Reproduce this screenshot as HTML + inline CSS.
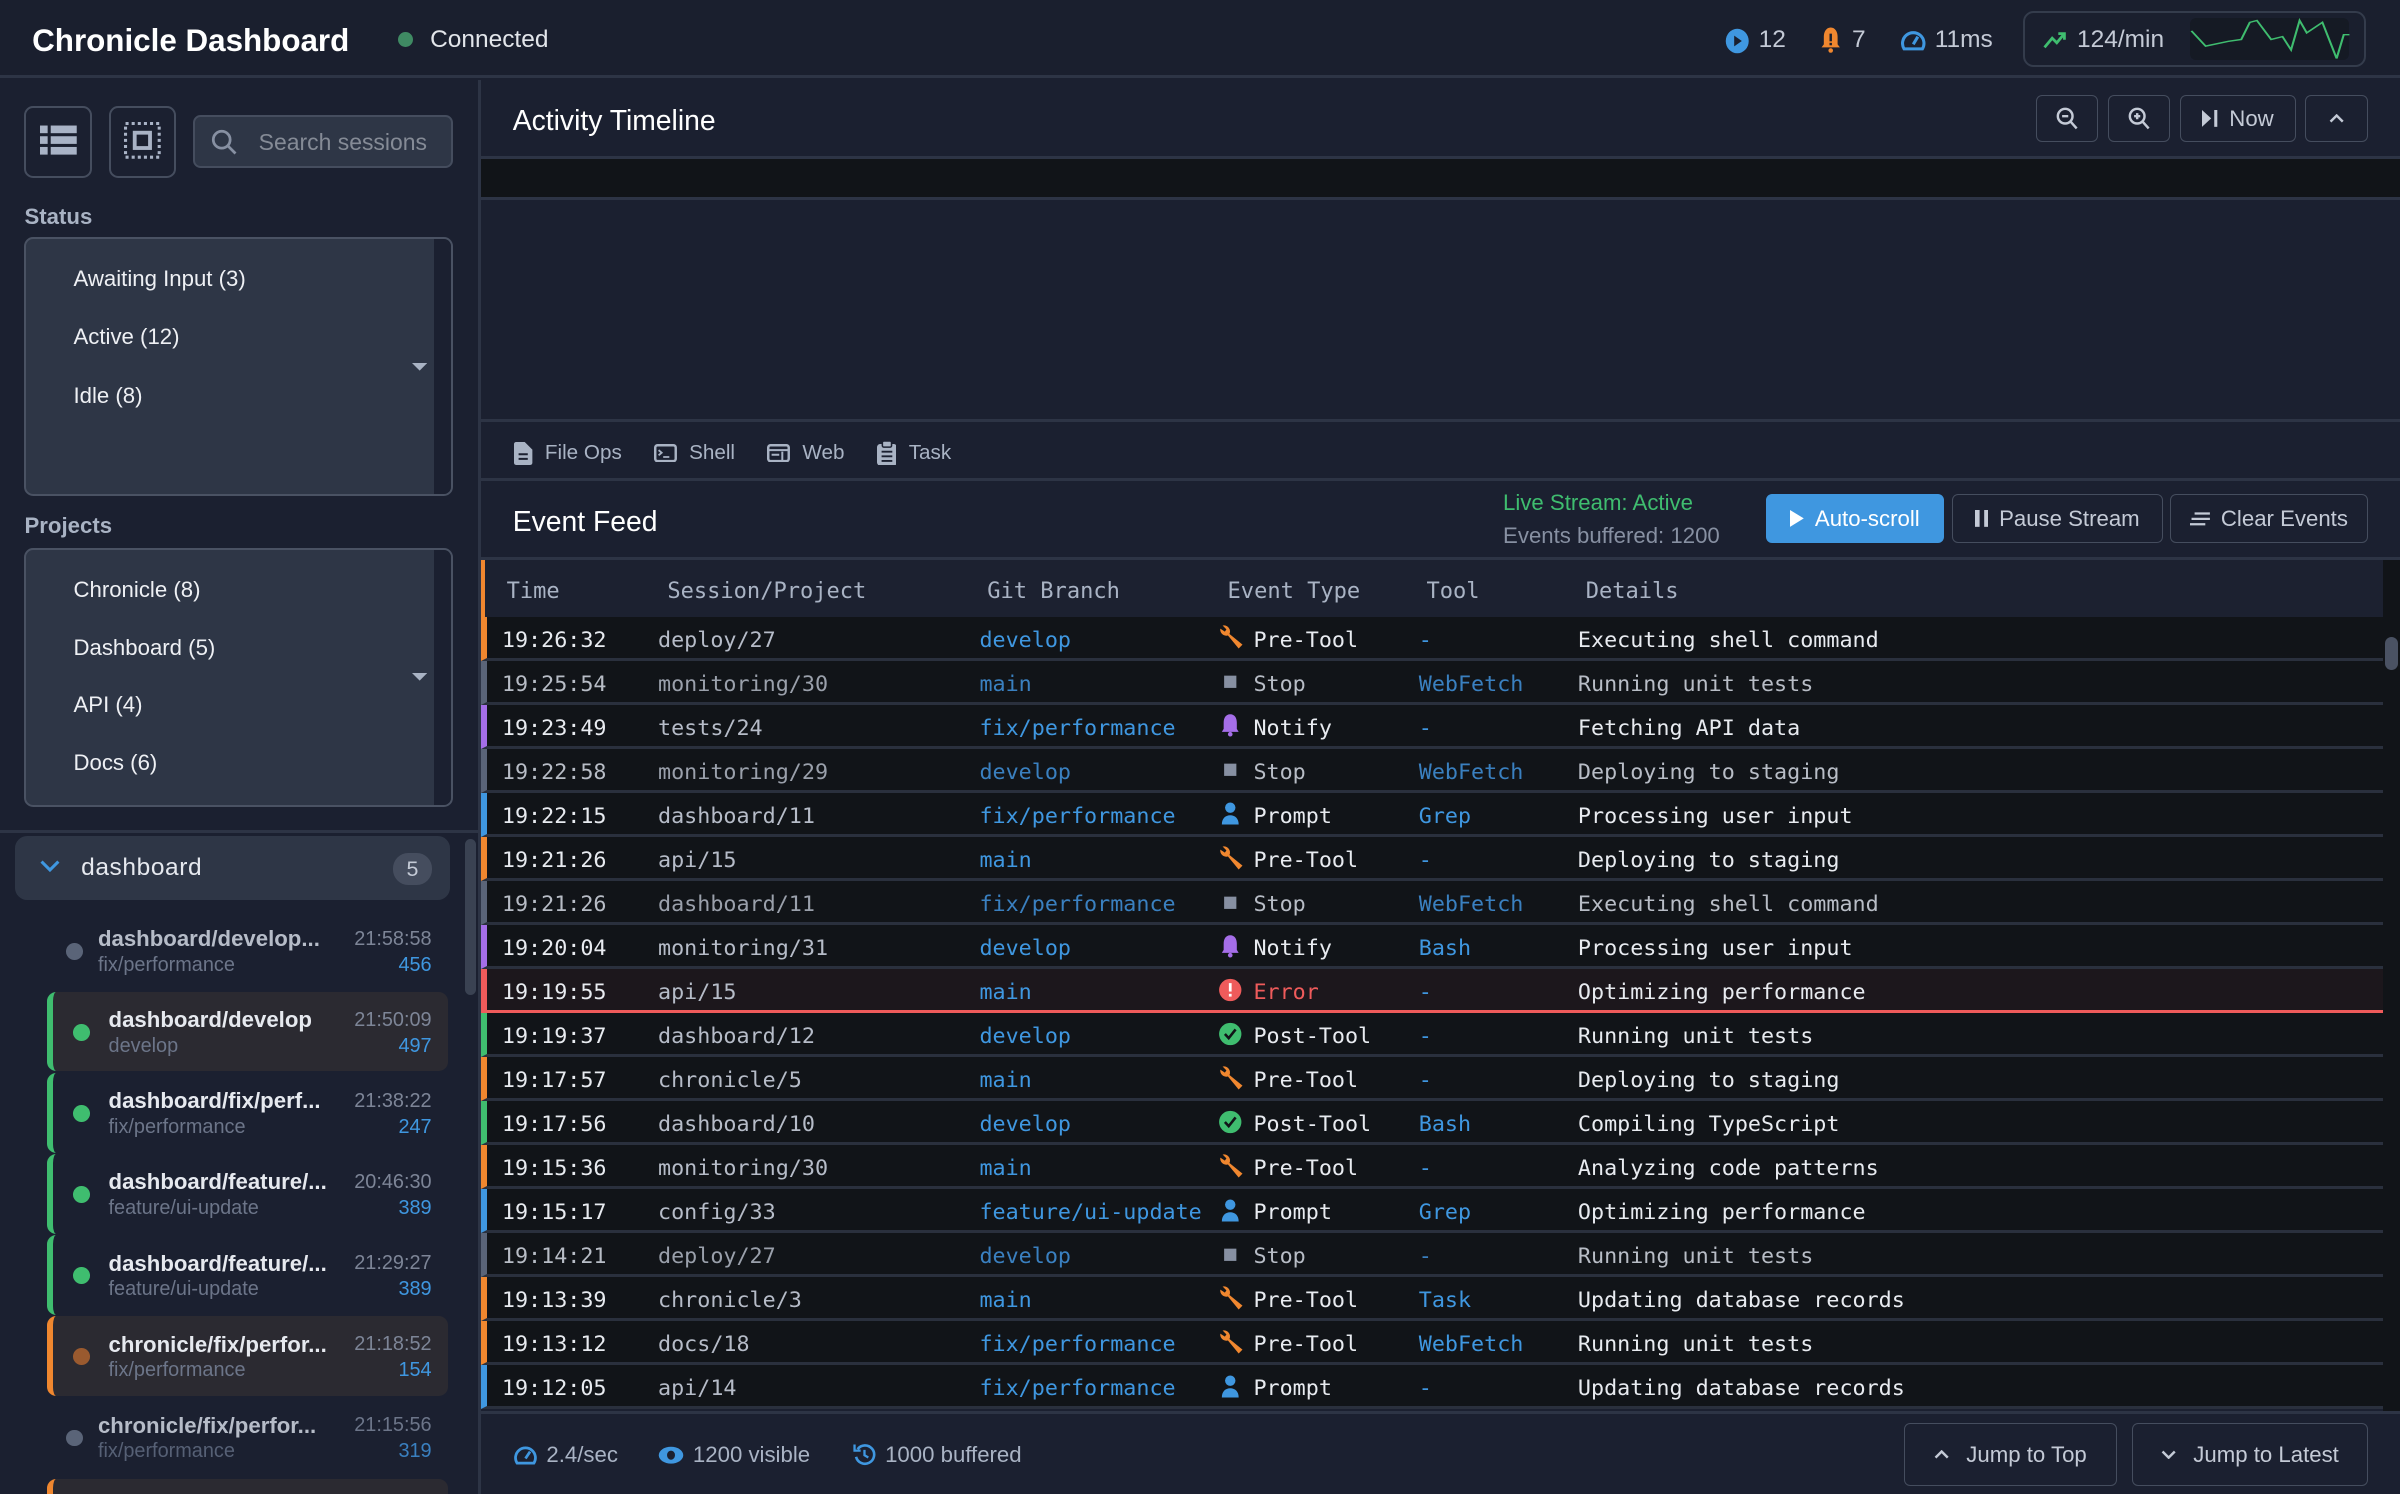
<!DOCTYPE html>
<html><head><meta charset="utf-8"><style>
*{box-sizing:border-box;margin:0;padding:0}
html,body{width:2400px;height:1494px;overflow:hidden;background:#1b2030}
#r{zoom:1.530612;width:1568px;height:976px;position:relative;font-family:"Liberation Sans",Arial,sans-serif;color:#e6e9ef;background:#1b2030;overflow:hidden}
.a{position:absolute}
.mono{font-family:"DejaVu Sans Mono","Liberation Mono",monospace}
.btn{position:absolute;border:1px solid #454d5e;border-radius:4px;color:#c4cad6;font-size:14.5px;display:flex;align-items:center;justify-content:center;gap:7px}
.row{position:absolute;left:314px;width:1243px;height:28.75px;background:#111418;border-bottom:2px solid #2a303d;font-size:14.2px;color:#e8ebf0}
.row span{position:absolute;top:7px;white-space:nowrap}
.row .t{left:10px}.row .s{left:112px;color:#b6bcc8}.row .g{left:322px;color:#3f97e0}
.row .ic{left:478px;top:5px}.row .e{left:501px}.row .tl{left:609px;color:#3f97e0}.row .d{left:713px}
.row.dim .t,.row.dim .d,.row.dim .e{color:#b8bdc6}.row.dim .s{color:#9aa0ab}.row.dim .g,.row.dim .tl{color:#3a80c0}
.si{position:absolute;left:31px;width:262px;height:52px;border-radius:6px}
.si .dot{position:absolute;left:13px;top:21px;width:11px;height:11px;border-radius:50%}
.si .n{position:absolute;left:36px;top:10px;font-size:14.5px;font-weight:bold;color:#e6e9ef;white-space:nowrap}
.si .b{position:absolute;left:36px;top:28px;font-size:13px;color:#6c7589}
.si .tm{position:absolute;right:11px;top:11px;font-size:13px;color:#7d8597}
.si .c{position:absolute;right:11px;top:28px;font-size:13px;color:#3f97e0}
.opt{position:absolute;left:48px;font-size:14.5px;color:#eef0f4}
</style></head><body><div id="r">
<!-- header -->
<div class="a" style="left:0;top:0;width:1568px;height:51px;background:#1a1f2e;border-bottom:2px solid #2d3445"></div>
<div class="a" style="left:21px;top:15px;font-size:20.5px;font-weight:bold;color:#fff">Chronicle Dashboard</div>
<div class="a" style="left:260px;top:21px;width:10px;height:10px;border-radius:50%;background:#3f8a63"></div>
<div class="a" style="left:281px;top:17px;font-size:16px;color:#e2e5ea">Connected</div>
<svg class="a" style="left:1127px;top:18px" width="16" height="17"><ellipse cx="8" cy="8.5" rx="7.5" ry="8" fill="#3f97e0"/><path d="M6 5l5 3.5-5 3.5z" fill="#1a1f2e"/></svg>
<div class="a" style="left:1149px;top:17px;font-size:16px;color:#c4cad6">12</div>
<svg class="a" style="left:1189px;top:17px" width="14" height="18"><path d="M7 1c-3 0-4.5 3-4.5 6v5L1 14h12l-1.5-2V7C11.5 4 10 1 7 1z" fill="#f0872f"/><rect x="6.2" y="5" width="1.6" height="5" fill="#1a1f2e"/><rect x="6.2" y="11" width="1.6" height="1.6" fill="#1a1f2e"/><circle cx="7" cy="16" r="1.5" fill="#f0872f"/></svg>
<div class="a" style="left:1210px;top:17px;font-size:16px;color:#c4cad6">7</div>
<svg class="a" style="left:1242px;top:19px" width="16" height="15"><path d="M2 13A7 7 0 1 1 14 13z" fill="none" stroke="#3f97e0" stroke-width="2"/><path d="M8 10L11 5" stroke="#3f97e0" stroke-width="2"/></svg>
<div class="a" style="left:1264px;top:17px;font-size:16px;color:#c4cad6">11ms</div>
<div class="a" style="left:1322px;top:7px;width:224px;height:37px;border:1.5px solid #343c4c;border-radius:7px"></div>
<svg class="a" style="left:1335px;top:19px" width="16" height="13"><path d="M1 12l5-6 3 3 5-6M10 3h4v4" fill="none" stroke="#3fbd6f" stroke-width="1.8"/></svg>
<div class="a" style="left:1357px;top:17px;font-size:16px;color:#c4cad6">124/min</div>
<div class="a" style="left:1431px;top:12px;width:104px;height:27px;background:#151a24;border-radius:4px"></div>
<svg class="a" style="left:1431px;top:12px" width="106" height="28"><polyline points="1,12 11,28 27,23 36,21 42,3 47,1 57,21 65,18 71,32 77,1 82,14 93,3 103,41 108,16 112,16" fill="none" stroke="#3fbd6f" stroke-width="1.5" transform="translate(0,1) scale(.93,.62)"/></svg>
<!-- sidebar -->
<div class="a" style="left:312px;top:52px;width:2px;height:924px;background:#2d3445"></div>
<div class="a" style="left:16px;top:69px;width:44px;height:47px;border:1.5px solid #454d5e;border-radius:6px"></div>
<svg class="a" style="left:26px;top:81px" width="24" height="22"><rect x="0" y="1" width="5" height="5" fill="#a9b3c6"/><rect x="7" y="1" width="17" height="5" fill="#a9b3c6"/><rect x="0" y="8" width="5" height="5" fill="#a9b3c6"/><rect x="7" y="8" width="17" height="5" fill="#a9b3c6"/><rect x="0" y="15" width="5" height="5" fill="#a9b3c6"/><rect x="7" y="15" width="17" height="5" fill="#a9b3c6"/></svg>
<div class="a" style="left:71px;top:69px;width:44px;height:47px;border:1.5px solid #454d5e;border-radius:6px"></div>
<svg class="a" style="left:81px;top:80px" width="24" height="24"><rect x="1" y="1" width="22" height="22" fill="none" stroke="#a9b3c6" stroke-width="2" stroke-dasharray="2 2"/><rect x="7" y="7" width="10" height="10" fill="none" stroke="#a9b3c6" stroke-width="2.5"/></svg>
<div class="a" style="left:126px;top:75px;width:170px;height:35px;background:#2e3646;border:1.5px solid #454d5e;border-radius:5px"></div>
<svg class="a" style="left:138px;top:84px" width="17" height="18"><circle cx="7" cy="7" r="5.5" fill="none" stroke="#8790a2" stroke-width="1.8"/><path d="M11 11l5 5" stroke="#8790a2" stroke-width="1.8"/></svg>
<div class="a" style="left:169px;top:84px;width:112px;overflow:hidden;white-space:nowrap;font-size:15px;color:#858b96">Search sessions</div>
<div class="a" style="left:16px;top:133px;font-size:14.5px;font-weight:bold;color:#a9b3c4">Status</div>
<div class="a" style="left:16px;top:155px;width:280px;height:169px;background:#2e3646;border:1.5px solid #4a5263;border-radius:6px;overflow:hidden"><div class="a" style="right:0;top:0;width:11px;height:100%;background:#1b2030"></div></div>
<div class="opt" style="top:174px">Awaiting Input (3)</div><div class="opt" style="top:212px">Active (12)</div><div class="opt" style="top:250px">Idle (8)</div>
<svg class="a" style="left:269px;top:237px" width="10" height="6"><path d="M0 0h10L5 5z" fill="#a9b3c4"/></svg>
<div class="a" style="left:16px;top:335px;font-size:14.5px;font-weight:bold;color:#a9b3c4">Projects</div>
<div class="a" style="left:16px;top:358px;width:280px;height:169px;background:#2e3646;border:1.5px solid #4a5263;border-radius:6px;overflow:hidden"><div class="a" style="right:0;top:0;width:11px;height:100%;background:#1b2030"></div></div>
<div class="opt" style="top:377px">Chronicle (8)</div><div class="opt" style="top:415px">Dashboard (5)</div><div class="opt" style="top:452px">API (4)</div><div class="opt" style="top:490px">Docs (6)</div>
<svg class="a" style="left:269px;top:440px" width="10" height="6"><path d="M0 0h10L5 5z" fill="#a9b3c4"/></svg>
<div class="a" style="left:0;top:542px;width:312px;height:2px;background:#2d3445"></div>
<div class="a" style="left:304px;top:548px;width:7px;height:102px;border-radius:4px;background:#3a4252"></div>
<div class="a" style="left:10px;top:546px;width:284px;height:42px;background:#2e3646;border-radius:8px"></div>
<svg class="a" style="left:26px;top:562px" width="13" height="9"><path d="M1 1l5.5 5.5L12 1" fill="none" stroke="#3f97e0" stroke-width="2"/></svg>
<div class="a" style="left:53px;top:558px;font-size:16px;color:#e6e9ef;letter-spacing:.4px">dashboard</div>
<div class="a" style="left:257px;top:557px;width:25px;height:21px;border-radius:10px;background:#454d5e;color:#c4cad6;font-size:14px;text-align:center;line-height:21px">5</div>
<div class="si" style="top:595px"><div class="dot" style="left:12px;background:#5a6478"></div><div class="n" style="left:33px;color:#b6bcc8">dashboard/develop...</div><div class="b" style="left:33px">fix/performance</div><div class="tm">21:58:58</div><div class="c">456</div></div>
<div class="si" style="top:648px;background:#2b2a31;border-left:4px solid #3fbd6f"><div class="dot" style="background:#3fbd6f"></div><div class="n">dashboard/develop</div><div class="b">develop</div><div class="tm">21:50:09</div><div class="c">497</div></div>
<div class="si" style="top:701px;border-left:4px solid #3fbd6f"><div class="dot" style="background:#3fbd6f"></div><div class="n">dashboard/fix/perf...</div><div class="b">fix/performance</div><div class="tm">21:38:22</div><div class="c">247</div></div>
<div class="si" style="top:754px;border-left:4px solid #3fbd6f"><div class="dot" style="background:#3fbd6f"></div><div class="n">dashboard/feature/...</div><div class="b">feature/ui-update</div><div class="tm">20:46:30</div><div class="c">389</div></div>
<div class="si" style="top:807px;border-left:4px solid #3fbd6f"><div class="dot" style="background:#3fbd6f"></div><div class="n">dashboard/feature/...</div><div class="b">feature/ui-update</div><div class="tm">21:29:27</div><div class="c">389</div></div>
<div class="si" style="top:860px;background:#2b2a31;border-left:4px solid #f0872f"><div class="dot" style="background:#9a5a2f"></div><div class="n">chronicle/fix/perfor...</div><div class="b">fix/performance</div><div class="tm">21:18:52</div><div class="c">154</div></div>
<div class="si" style="top:913px"><div class="dot" style="left:12px;background:#5a6478"></div><div class="n" style="left:33px;color:#b6bcc8">chronicle/fix/perfor...</div><div class="b" style="left:33px;color:#566075">fix/performance</div><div class="tm" style="color:#6c7589">21:15:56</div><div class="c" style="color:#3a80c0">319</div></div>
<div class="si" style="top:966px;background:#2b2a31;border-left:4px solid #f0872f"></div>
<!-- timeline -->
<div class="a" style="left:335px;top:68px;font-size:18.5px;color:#fff">Activity Timeline</div>
<div class="btn" style="left:1330px;top:62px;width:41px;height:31px"><svg width="14" height="15"><circle cx="6" cy="6" r="4.8" fill="none" stroke="#c4cad6" stroke-width="1.6"/><path d="M9.5 9.5l4 4.5M4 6h4" stroke="#c4cad6" stroke-width="1.6"/></svg></div>
<div class="btn" style="left:1377px;top:62px;width:41px;height:31px"><svg width="14" height="15"><circle cx="6" cy="6" r="4.8" fill="none" stroke="#c4cad6" stroke-width="1.6"/><path d="M9.5 9.5l4 4.5M4 6h4M6 4v4" stroke="#c4cad6" stroke-width="1.6"/></svg></div>
<div class="btn" style="left:1424px;top:62px;width:76px;height:31px"><svg width="11" height="11"><path d="M0 0l6 5.5L0 11z" fill="#c4cad6"/><rect x="8" y="0" width="2" height="11" fill="#c4cad6"/></svg>Now</div>
<div class="btn" style="left:1506px;top:62px;width:41px;height:31px"><svg width="10" height="6"><path d="M1 5l4-4 4 4" fill="none" stroke="#c4cad6" stroke-width="1.6"/></svg></div>
<div class="a" style="left:314px;top:102px;width:1254px;height:2px;background:#2d3445"></div>
<div class="a" style="left:314px;top:104px;width:1254px;height:25px;background:#111418"></div>
<div class="a" style="left:314px;top:129px;width:1254px;height:2px;background:#2d3445"></div>
<div class="a" style="left:314px;top:274px;width:1254px;height:2px;background:#2d3445"></div>
<div class="a" style="left:336px;top:288px;font-size:13.5px;color:#a9b3c4;display:flex;gap:8px;align-items:center">
<svg width="12" height="15"><path d="M0 1.5Q0 0 1.5 0H7l5 5v8.5Q12 15 10.5 15h-9Q0 15 0 13.5z" fill="#a9b3c4"/><path d="M3 8h6M3 11h6" stroke="#1b2030" stroke-width="1.3"/></svg><span style="margin-right:13px">File Ops</span>
<svg width="15" height="12"><rect x="0.8" y="0.8" width="13.4" height="10.4" rx="1.5" fill="none" stroke="#a9b3c4" stroke-width="1.6"/><path d="M3 4l2 1.7L3 7.4M6 8.5h4" stroke="#a9b3c4" stroke-width="1.2" fill="none"/></svg><span style="margin-right:13px">Shell</span>
<svg width="15" height="12"><rect x="0.8" y="0.8" width="13.4" height="10.4" rx="1.5" fill="none" stroke="#a9b3c4" stroke-width="1.6"/><path d="M1 4h13M3 7h5M10 5v6" stroke="#a9b3c4" stroke-width="1.3"/></svg><span style="margin-right:13px">Web</span>
<svg width="13" height="16"><rect x="0" y="2" width="13" height="14" rx="2" fill="#a9b3c4"/><rect x="3.5" y="0" width="6" height="4" rx="1" fill="#a9b3c4" stroke="#1b2030"/><path d="M3 7h7M3 10h7M3 13h7" stroke="#1b2030" stroke-width="1.2"/></svg><span>Task</span></div>
<div class="a" style="left:314px;top:312px;width:1254px;height:2px;background:#2d3445"></div>
<!-- event feed -->
<div class="a" style="left:335px;top:330px;font-size:18.5px;color:#fff">Event Feed</div>
<div class="a" style="left:982px;top:320px;font-size:14.5px;color:#3fbd6f">Live Stream: Active</div>
<div class="a" style="left:982px;top:342px;font-size:14.5px;color:#8790a2">Events buffered: 1200</div>
<div class="btn" style="left:1154px;top:323px;width:116px;height:32px;background:#3f97e0;border-color:#3f97e0;color:#fff"><svg width="9" height="11"><path d="M0 0l9 5.5L0 11z" fill="#fff"/></svg>Auto-scroll</div>
<div class="btn" style="left:1275px;top:323px;width:138px;height:32px"><svg width="9" height="11"><rect width="3" height="11" fill="#c4cad6"/><rect x="6" width="3" height="11" fill="#c4cad6"/></svg>Pause Stream</div>
<div class="btn" style="left:1418px;top:323px;width:129px;height:32px"><svg width="13" height="9"><path d="M3 1h10M1 4.5h12M0 8h10" stroke="#c4cad6" stroke-width="1.5"/></svg>Clear Events</div>
<div class="a" style="left:314px;top:364px;width:1254px;height:2px;background:#2d3445"></div>
<div class="a" style="left:314px;top:366px;width:1243px;height:37px;background:#1c2130;border-left:3px solid #f0872f"></div>
<div class="a mono" style="left:314px;top:378px;width:1243px;font-size:14.4px;color:#a9b3c4">
<span class="a" style="left:17px">Time</span><span class="a" style="left:122px">Session/Project</span><span class="a" style="left:331px">Git Branch</span><span class="a" style="left:488px">Event Type</span><span class="a" style="left:618px">Tool</span><span class="a" style="left:722px">Details</span></div>
<div class="a" style="left:1557px;top:366px;width:11px;height:558px;background:#111418"></div>
<div class="a" style="left:1558px;top:416px;width:9px;height:22px;border-radius:5px;background:#4a5263"></div>
<svg width="0" height="0" style="position:absolute"><defs>
<g id="w"><path d="M1.5 3a4 4 0 0 0 5 4.5l7 8.5 2.5-2.5-8.5-7A4 4 0 0 0 3 1l2.5 2.5-1 1.5z" fill="#f0872f"/></g>
<g id="st"><rect x="4" y="5" width="8" height="8" fill="#8790a2"/></g>
<g id="nt"><path d="M8 1.5c-3 0-4.3 2.6-4.3 5.5v4L2.5 13h11l-1.2-2V7C12.3 4.1 11 1.5 8 1.5z" fill="#a56ee8"/><circle cx="8" cy="14.5" r="1.5" fill="#a56ee8"/></g>
<g id="pr"><circle cx="8" cy="5" r="3.4" fill="#3f97e0"/><path d="M2.5 16c0-4 2.5-6 5.5-6s5.5 2 5.5 6z" fill="#3f97e0"/></g>
<g id="er"><circle cx="8" cy="8.5" r="7.3" fill="#ef5b5b"/><rect x="7.1" y="4" width="1.8" height="5.5" fill="#fff"/><rect x="7.1" y="11" width="1.8" height="1.8" fill="#fff"/></g>
<g id="ok"><circle cx="8" cy="8.5" r="7.3" fill="#3fbd6f"/><path d="M4.5 8.5l2.5 2.7L11.5 5.5" fill="none" stroke="#111418" stroke-width="1.7"/></g>
</defs></svg>
<div class="mono">
<div class="row" style="top:403px;border-left:4px solid #f0872f"><span class="t">19:26:32</span><span class="s">deploy/27</span><span class="g">develop</span><svg class="a ic" width="17" height="18"><use href="#w"/></svg><span class="e">Pre-Tool</span><span class="tl">-</span><span class="d">Executing shell command</span></div>
<div class="row dim" style="top:431.75px;border-left:4px solid #5a6478"><span class="t">19:25:54</span><span class="s">monitoring/30</span><span class="g">main</span><svg class="a ic" width="17" height="18"><use href="#st"/></svg><span class="e">Stop</span><span class="tl">WebFetch</span><span class="d">Running unit tests</span></div>
<div class="row" style="top:460.5px;border-left:4px solid #a56ee8"><span class="t">19:23:49</span><span class="s">tests/24</span><span class="g">fix/performance</span><svg class="a ic" width="17" height="18"><use href="#nt"/></svg><span class="e">Notify</span><span class="tl">-</span><span class="d">Fetching API data</span></div>
<div class="row dim" style="top:489.25px;border-left:4px solid #5a6478"><span class="t">19:22:58</span><span class="s">monitoring/29</span><span class="g">develop</span><svg class="a ic" width="17" height="18"><use href="#st"/></svg><span class="e">Stop</span><span class="tl">WebFetch</span><span class="d">Deploying to staging</span></div>
<div class="row" style="top:518px;border-left:4px solid #3f97e0"><span class="t">19:22:15</span><span class="s">dashboard/11</span><span class="g">fix/performance</span><svg class="a ic" width="17" height="18"><use href="#pr"/></svg><span class="e">Prompt</span><span class="tl">Grep</span><span class="d">Processing user input</span></div>
<div class="row" style="top:546.75px;border-left:4px solid #f0872f"><span class="t">19:21:26</span><span class="s">api/15</span><span class="g">main</span><svg class="a ic" width="17" height="18"><use href="#w"/></svg><span class="e">Pre-Tool</span><span class="tl">-</span><span class="d">Deploying to staging</span></div>
<div class="row dim" style="top:575.5px;border-left:4px solid #5a6478"><span class="t">19:21:26</span><span class="s">dashboard/11</span><span class="g">fix/performance</span><svg class="a ic" width="17" height="18"><use href="#st"/></svg><span class="e">Stop</span><span class="tl">WebFetch</span><span class="d">Executing shell command</span></div>
<div class="row" style="top:604.25px;border-left:4px solid #a56ee8"><span class="t">19:20:04</span><span class="s">monitoring/31</span><span class="g">develop</span><svg class="a ic" width="17" height="18"><use href="#nt"/></svg><span class="e">Notify</span><span class="tl">Bash</span><span class="d">Processing user input</span></div>
<div class="row" style="top:633px;border-left:4px solid #ef5b5b;background:#1c171c;border-bottom:2px solid #ef5b5b"><span class="t">19:19:55</span><span class="s">api/15</span><span class="g">main</span><svg class="a ic" width="17" height="18"><use href="#er"/></svg><span class="e" style="color:#ef5b5b">Error</span><span class="tl">-</span><span class="d">Optimizing performance</span></div>
<div class="row" style="top:661.75px;border-left:4px solid #3fbd6f"><span class="t">19:19:37</span><span class="s">dashboard/12</span><span class="g">develop</span><svg class="a ic" width="17" height="18"><use href="#ok"/></svg><span class="e">Post-Tool</span><span class="tl">-</span><span class="d">Running unit tests</span></div>
<div class="row" style="top:690.5px;border-left:4px solid #f0872f"><span class="t">19:17:57</span><span class="s">chronicle/5</span><span class="g">main</span><svg class="a ic" width="17" height="18"><use href="#w"/></svg><span class="e">Pre-Tool</span><span class="tl">-</span><span class="d">Deploying to staging</span></div>
<div class="row" style="top:719.25px;border-left:4px solid #3fbd6f"><span class="t">19:17:56</span><span class="s">dashboard/10</span><span class="g">develop</span><svg class="a ic" width="17" height="18"><use href="#ok"/></svg><span class="e">Post-Tool</span><span class="tl">Bash</span><span class="d">Compiling TypeScript</span></div>
<div class="row" style="top:748px;border-left:4px solid #f0872f"><span class="t">19:15:36</span><span class="s">monitoring/30</span><span class="g">main</span><svg class="a ic" width="17" height="18"><use href="#w"/></svg><span class="e">Pre-Tool</span><span class="tl">-</span><span class="d">Analyzing code patterns</span></div>
<div class="row" style="top:776.75px;border-left:4px solid #3f97e0"><span class="t">19:15:17</span><span class="s">config/33</span><span class="g">feature/ui-update</span><svg class="a ic" width="17" height="18"><use href="#pr"/></svg><span class="e">Prompt</span><span class="tl">Grep</span><span class="d">Optimizing performance</span></div>
<div class="row dim" style="top:805.5px;border-left:4px solid #5a6478"><span class="t">19:14:21</span><span class="s">deploy/27</span><span class="g">develop</span><svg class="a ic" width="17" height="18"><use href="#st"/></svg><span class="e">Stop</span><span class="tl">-</span><span class="d">Running unit tests</span></div>
<div class="row" style="top:834.25px;border-left:4px solid #f0872f"><span class="t">19:13:39</span><span class="s">chronicle/3</span><span class="g">main</span><svg class="a ic" width="17" height="18"><use href="#w"/></svg><span class="e">Pre-Tool</span><span class="tl">Task</span><span class="d">Updating database records</span></div>
<div class="row" style="top:863px;border-left:4px solid #f0872f"><span class="t">19:13:12</span><span class="s">docs/18</span><span class="g">fix/performance</span><svg class="a ic" width="17" height="18"><use href="#w"/></svg><span class="e">Pre-Tool</span><span class="tl">WebFetch</span><span class="d">Running unit tests</span></div>
<div class="row" style="top:891.75px;border-left:4px solid #3f97e0"><span class="t">19:12:05</span><span class="s">api/14</span><span class="g">fix/performance</span><svg class="a ic" width="17" height="18"><use href="#pr"/></svg><span class="e">Prompt</span><span class="tl">-</span><span class="d">Updating database records</span></div>
</div>
<!-- footer -->
<div class="a" style="left:314px;top:922px;width:1254px;height:2px;background:#2d3445"></div>
<div class="a" style="left:336px;top:942px;font-size:14.5px;color:#a9b3c4;display:flex;align-items:center;gap:6px">
<svg width="15" height="14"><path d="M2 12.5A6.5 6.5 0 1 1 13 12.5z" fill="none" stroke="#3f97e0" stroke-width="1.8"/><path d="M7.5 9.5l3-4.5" stroke="#3f97e0" stroke-width="1.8"/></svg><span style="margin-right:20px">2.4/sec</span>
<svg width="17" height="12"><ellipse cx="8.5" cy="6" rx="8" ry="5.5" fill="#3f97e0"/><ellipse cx="8.5" cy="6" rx="2.6" ry="3" fill="#1b2030"/></svg><span style="margin-right:22px">1200 visible</span>
<svg width="15" height="15"><path d="M3 4A6 6 0 1 1 2 9" fill="none" stroke="#3f97e0" stroke-width="1.7"/><path d="M1 1v4h4" fill="none" stroke="#3f97e0" stroke-width="1.5"/><path d="M7.5 4.5v3.5l2.5 1.5" fill="none" stroke="#3f97e0" stroke-width="1.5"/></svg><span>1000 buffered</span></div>
<div class="btn" style="left:1244px;top:930px;width:139px;height:41px"><svg width="10" height="6"><path d="M1 5l4-4 4 4" fill="none" stroke="#c4cad6" stroke-width="1.6"/></svg>&nbsp;Jump to Top</div>
<div class="btn" style="left:1393px;top:930px;width:154px;height:41px"><svg width="10" height="6"><path d="M1 1l4 4 4-4" fill="none" stroke="#c4cad6" stroke-width="1.6"/></svg>&nbsp;Jump to Latest</div>
</div></body></html>
